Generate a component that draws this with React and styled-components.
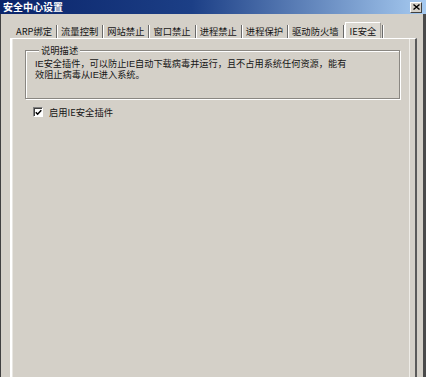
import React from "react";
import styled, { createGlobalStyle } from "styled-components";

const Global = createGlobalStyle`
  html, body { margin: 0; padding: 0; background: #d4d0c8; }
  body { font-family: "Noto Sans CJK SC", "Liberation Sans", sans-serif; }
  * { box-sizing: border-box; }
`;

const Window = styled.div`
  width: 426px;
  height: 377px;
  display: flex;
  flex-direction: column;
  overflow: hidden;
  background: #d4d0c8;
`;

const TitleBar = styled.div`
  height: 14px;
  flex: none;
  display: flex;
  align-items: center;
  justify-content: space-between;
  padding: 0 4px 0 3px;
  background: linear-gradient(to right, #0a246a 0%, #1c3f86 45%, #a6caf0 100%);
`;

const Title = styled.span`
  color: #fff;
  font-size: 10px;
  font-weight: 700;
  line-height: 14px;
`;

const CloseBtn = styled.div`
  width: 12px;
  height: 11px;
  background: #d4d0c8;
  border: 1px solid;
  border-color: #fff #404040 #404040 #fff;
  display: flex;
  align-items: center;
  justify-content: center;
`;

const Frame = styled.div`
  flex: 1;
  min-height: 0;
  display: flex;
  flex-direction: column;
  border-left: 1px solid #404040;
  border-right: 3px solid #4a4a4a;
  padding: 8px 6px 0 9px;
`;

const TabStrip = styled.div`
  height: 16px;
  flex: none;
  display: flex;
  align-items: stretch;
  padding-left: 3px;
`;

const Tab = styled.div`
  display: flex;
  align-items: center;
  padding: 0 ${(p) => (p.$active ? "4px" : "2px")};
  font-size: 9.3px;
  line-height: 10px;
  color: #151515;
  white-space: nowrap;
  background: ${(p) => (p.$active ? "#dcd9d2" : "transparent")};
  border: 1px solid ${(p) => (p.$active ? "#fff" : "transparent")};
  border-right-color: ${(p) => (p.$active ? "#a09d97" : "transparent")};
  border-bottom: none;
`;

const Sep = styled.div`
  width: 2px;
  margin: 3px 0 0 1px;
  border-left: 1px solid #6a6a6a;
  border-right: 1px solid #fff;
`;

const Panel = styled.div`
  flex: 1;
  min-height: 0;
  display: flex;
  border-top: 1px solid #fff;
  border-left: 2px solid #fff;
  border-right: 2px solid #5a5a5a;
  padding-right: 5px;
`;

const Page = styled.div`
  flex: 1;
  display: flex;
  flex-direction: column;
  border-left: 1px solid #e8e6e1;
  border-right: 1px solid #eeece7;
`;

const GroupBox = styled.fieldset`
  margin: 6px 9px 0 12px;
  padding: 4px 8px 18px 9px;
  min-width: 0;
  border: 1px solid #8a8782;
  box-shadow: inset 1px 1px 0 #fff, 1px 1px 0 #fff;
`;

const Legend = styled.legend`
  font-size: 9.3px;
  line-height: 10px;
  padding: 0 2px;
  margin-left: 4px;
  background: #d4d0c8;
  color: #151515;
`;

const Desc = styled.p`
  margin: 0;
  font-family: "Liberation Sans", "Noto Sans CJK SC", sans-serif;
  font-size: 9.2px;
  line-height: 10.5px;
  color: #151515;
`;

const CheckRow = styled.label`
  display: flex;
  align-items: center;
  gap: 6px;
  margin: 8px 0 0 20px;
  font-size: 9.3px;
  line-height: 10px;
  color: #151515;
`;

const Box = styled.span`
  width: 10px;
  height: 10px;
  flex: none;
  background: #fff;
  border: 1px solid;
  border-color: #808080 #fff #fff #808080;
  box-shadow: inset 1px 1px 0 #404040;
  display: flex;
  align-items: center;
  justify-content: center;
`;

const tabs = [
  "ARP绑定",
  "流量控制",
  "网站禁止",
  "窗口禁止",
  "进程禁止",
  "进程保护",
  "驱动防火墙",
  "IE安全",
];

export default function App() {
  return (
    <>
      <Global />
      <Window>
        <TitleBar>
          <Title>安全中心设置</Title>
          <CloseBtn>
            <svg width="7" height="6" viewBox="0 0 7 6">
              <path d="M0.5 0.5 L6.5 5.5 M6.5 0.5 L0.5 5.5" stroke="#000" strokeWidth="1.4" />
            </svg>
          </CloseBtn>
        </TitleBar>
        <Frame>
          <TabStrip>
            {tabs.map((t, i) => (
              <React.Fragment key={t}>
                <Tab $active={i === tabs.length - 1}>{t}</Tab>
                <Sep />
              </React.Fragment>
            ))}
          </TabStrip>
          <Panel>
            <Page>
              <GroupBox>
                <Legend>说明描述</Legend>
                <Desc>
                  IE安全插件，可以防止IE自动下载病毒并运行，且不占用系统任何资源，能有
                  <br />
                  效阻止病毒从IE进入系统。
                </Desc>
              </GroupBox>
              <CheckRow>
                <Box>
                  <svg width="7" height="7" viewBox="0 0 7 7">
                    <polyline points="0.8,3.2 2.6,5.2 6.3,1.2" fill="none" stroke="#000" strokeWidth="1.5" />
                  </svg>
                </Box>
                启用IE安全插件
              </CheckRow>
            </Page>
          </Panel>
        </Frame>
      </Window>
    </>
  );
}
